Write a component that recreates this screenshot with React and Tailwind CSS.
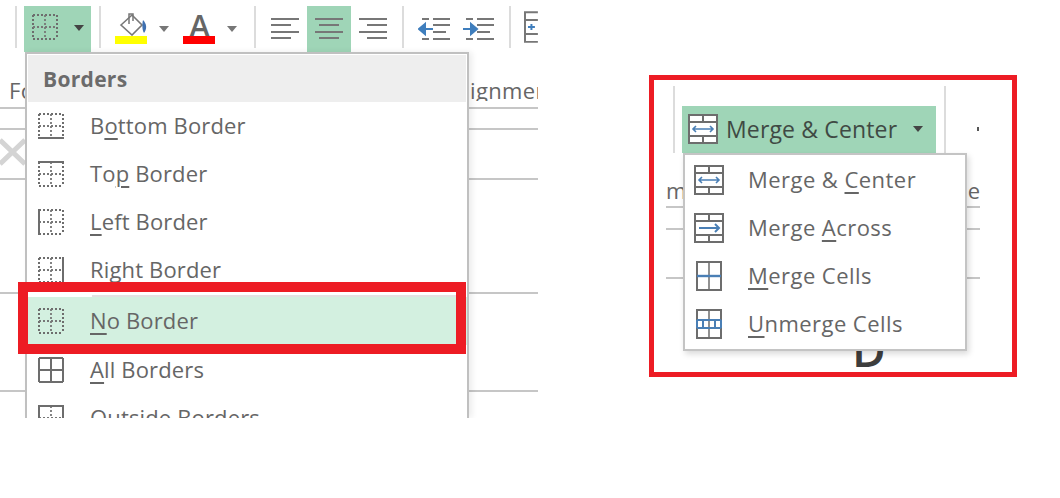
const font = { fontFamily: '"Open Sans", "Noto Sans", sans-serif' };

function BorderIcon({ side = "none", className = "" }) {
  const outer = "M1 1H25M1 25H25M1 1V25M25 1V25";
  const inner = "M1 13H25M13 1V25";
  return (
    <svg width="26" height="26" viewBox="0 0 26 26" className={className}>
      {side === "all" ? (
        <path d={`${outer}${inner}`} fill="none" stroke="#6d6d6d" strokeWidth="2" />
      ) : (
        <>
          <path d={outer} fill="none" stroke="#6d6d6d" strokeWidth="2" strokeDasharray="2 2" />
          <path d={inner} fill="none" stroke="#777" strokeWidth="1.8" strokeDasharray="2 2" />
        </>
      )}
      {side === "bottom" && <path d="M0 25H26" stroke="#6d6d6d" strokeWidth="2" />}
      {side === "top" && <path d="M0 1H26" stroke="#6d6d6d" strokeWidth="2" />}
      {side === "left" && <path d="M1 0V26" stroke="#6d6d6d" strokeWidth="2" />}
      {side === "right" && <path d="M25 0V26" stroke="#6d6d6d" strokeWidth="2" />}
      {side === "outside" && <rect x="1" y="1" width="24" height="24" fill="none" stroke="#6d6d6d" strokeWidth="2" />}
    </svg>
  );
}

function MergeIcon({ kind = "center" }) {
  const grey = "#6d6d6d";
  const blue = "#4a7fb5";
  if (kind === "cells" || kind === "unmerge") {
    return (
      <svg width="30" height="30" viewBox="0 0 30 30">
        <rect x="3" y="1" width="24" height="28" fill="none" stroke={grey} strokeWidth="2" />
        <path d="M15 1V29" stroke={grey} strokeWidth="1.5" />
        {kind === "cells" && <path d="M3 15H27" stroke={blue} strokeWidth="2.4" />}
        {kind === "unmerge" && (
          <>
            <path d="M3 11H27M3 19H27" stroke={blue} strokeWidth="2" />
            <path d="M3 11V19M9 11V19M21 11V19M27 11V19" stroke={blue} strokeWidth="2" />
          </>
        )}
      </svg>
    );
  }
  return (
    <svg width="30" height="30" viewBox="0 0 30 30">
      <rect x="1" y="1" width="28" height="28" fill="#fff" stroke={grey} strokeWidth="2" />
      <path d="M1 8H29M1 22H29M15 1V8M15 22V29" stroke={grey} strokeWidth="2" fill="none" />
      {kind === "center" ? (
        <path d="M5 15H25M8 12L5 15L8 18M22 12L25 15L22 18" stroke={blue} strokeWidth="1.6" fill="none" />
      ) : (
        <path d="M5 15H25M21 11L25 15L21 19" stroke={blue} strokeWidth="2" fill="none" />
      )}
    </svg>
  );
}

function Caret({ dark }) {
  return (
    <svg width="10" height="6" viewBox="0 0 10 6">
      <path d="M0 0H10L5 6Z" fill={dark ? "#444" : "#777"} />
    </svg>
  );
}

function Lines({ align }) {
  const rows = [0, 1, 0, 1];
  return (
    <div className="flex h-[21px] w-7 flex-col justify-between">
      {rows.map((short, i) => (
        <div
          key={i}
          className={`h-[2px] bg-[#777] ${short ? (align === "left" ? "w-5" : align === "right" ? "ml-2 w-5" : "mx-1 w-5") : "w-7"}`}
        />
      ))}
    </div>
  );
}

function Indent({ dir }) {
  return (
    <svg width="32" height="22" viewBox="0 0 32 22">
      <path d="M4 1H11M15 1H32M4 21H11M15 21H32M15 7H32M15 14H28" stroke="#777" strokeWidth="2" />
      {dir === "left" ? (
        <path d="M15 11H6M7 6L1 11L7 16Z" stroke="#3f7ebd" strokeWidth="2" fill="#3f7ebd" />
      ) : (
        <path d="M1 11H10M9 6L15 11L9 16Z" stroke="#3f7ebd" strokeWidth="2" fill="#3f7ebd" />
      )}
    </svg>
  );
}

function Sep() {
  return <div className="h-[42px] w-[2px] shrink-0 bg-[#dcdcdc]" />;
}

function Rule() {
  return <div className="h-[2px] bg-[#c6c6c6]" />;
}

function Label({ before, mark, after, className = "tracking-[0.15px]" }) {
  return (
    <span className={`pb-[2px] text-[22px] leading-none text-[#666] ${className}`}>
      {before}
      <span className="underline decoration-[2px] underline-offset-[4px]">{mark}</span>
      {after}
    </span>
  );
}

function BorderItem({ side, before, mark, after, className = "" }) {
  return (
    <div className={`flex h-12 shrink-0 items-center gap-[26px] pl-[10px] ${className}`}>
      <BorderIcon side={side} />
      <Label before={before} mark={mark} after={after} />
    </div>
  );
}

function MergeItem({ kind, before, mark, after }) {
  return (
    <div className="flex h-12 items-center gap-6 pl-[9px]">
      <MergeIcon kind={kind} />
      <Label before={before} mark={mark} after={after} className="tracking-[0.45px]" />
    </div>
  );
}

function BordersPanel() {
  return (
    <div className="relative h-[418px] w-[538px] shrink-0 overflow-hidden">
      {/* ribbon */}
      <div className="flex h-[52px] items-start pl-[15px] pt-[6px]">
        <Sep />
        <div className="ml-[7px] flex h-[46px] w-[68px] items-center bg-[#9fd5b7] pb-1 pl-2">
          <BorderIcon />
          <div className="ml-[16px] pt-[2px]">
            <Caret dark />
          </div>
        </div>
        <div className="ml-[8px]">
          <Sep />
        </div>
        <div className="ml-[14px] flex w-[32px] flex-col items-center pt-[6px]">
          <svg width="28" height="24" viewBox="0 0 28 24" className="ml-1">
            <path d="M2 13L13 3L23 13L13 23Z" fill="#fff" stroke="#777" strokeWidth="1.6" />
            <path d="M10 12V2H14V9" fill="none" stroke="#777" strokeWidth="1.5" />
            <path d="M24 8C28 12 28 17 25 21C23 18 23 12 24 8Z" fill="#3f70b0" />
          </svg>
          <div className="h-2 w-8 bg-[#ffff00]" />
        </div>
        <div className="ml-[12px] pt-[20px]">
          <Caret />
        </div>
        <div className="ml-[14px] flex w-[32px] flex-col items-center pt-[5px]">
          <span className="h-[25px] text-[32px] leading-[30px] font-semibold text-[#666]">A</span>
          <div className="h-2 w-8 bg-[#ff0000]" />
        </div>
        <div className="ml-[12px] pt-[20px]">
          <Caret />
        </div>
        <div className="ml-[17px]">
          <Sep />
        </div>
        <div className="ml-[15px] pt-[12px]">
          <Lines align="left" />
        </div>
        <div className="ml-[8px] flex h-[46px] w-[44px] justify-center bg-[#9fd5b7] pt-3">
          <Lines align="center" />
        </div>
        <div className="ml-[8px] pt-[12px]">
          <Lines align="right" />
        </div>
        <div className="ml-[15px]">
          <Sep />
        </div>
        <div className="ml-[14px] pt-[12px]">
          <Indent dir="left" />
        </div>
        <div className="ml-[12px] pt-[12px]">
          <Indent dir="right" />
        </div>
        <div className="ml-[15px]">
          <Sep />
        </div>
        <svg width="14" height="32" viewBox="0 0 14 32" className="ml-[13px] mt-[5px]">
          <path d="M14 1H1V31H14M1 9H14M1 23H14" fill="none" stroke="#777" strokeWidth="2" />
          <path d="M4 16H11M7.5 13V19" stroke="#3f7ebd" strokeWidth="2" />
        </svg>
      </div>

      {/* sheet behind the menu */}
      <div className="flex h-[55px] items-center justify-between pl-[9px] pt-[20px] text-[22px] leading-none tracking-[0.35px] text-[#666]">
        <span>Fo</span>
        <span className="w-[68px] overflow-hidden whitespace-nowrap">ignment</span>
      </div>
      <Rule />
      <div className="h-[19px]" />
      <Rule />
      <div className="h-[48px]" />
      <Rule />
      <div className="h-[112px]" />
      <Rule />
      <div className="h-[96px]" />
      <Rule />

      <svg width="25" height="30" viewBox="0 0 25 30" className="absolute left-0 top-[138px]">
        <path d="M0 2L25 26M25 2L0 26" stroke="#d4d4d4" strokeWidth="5" />
      </svg>

      {/* borders menu */}
      <div className="absolute left-[25px] top-[52px] flex h-[366px] w-[444px] flex-col overflow-hidden border-2 border-b-0 border-[#c0c0c0] bg-white pl-px pt-px shadow-[3px_0_6px_rgba(0,0,0,0.08)]">
        <div className="flex h-[47px] w-[438px] shrink-0 items-center bg-[#eeeeee] pl-[15px] pt-[1px] text-[21px] font-bold leading-none tracking-[0.3px] text-[#6b6b6b]">
          Borders
        </div>
        <BorderItem side="bottom" before="B" mark="o" after="ttom Border" />
        <BorderItem side="top" before="To" mark="p" after=" Border" />
        <BorderItem side="left" before="" mark="L" after="eft Border" />
        <BorderItem side="right" before="" mark="R" after="ight Border" />
        <div className="ml-[64px] mr-[2px] mt-px h-[2px] shrink-0 bg-[#e2e2e2]" />
        <BorderItem side="none" before="" mark="N" after="o Border" className="bg-[#d3f0e0]" />
        <div className="h-px shrink-0" />
        <BorderItem side="all" before="" mark="A" after="ll Borders" />
        <BorderItem side="outside" before="" mark="O" after="utside Borders" />
      </div>

      {/* callout */}
      <div className="absolute left-[18px] top-[282px] h-[72px] w-[448px] border-[10px] border-[#ed1c24]" />
    </div>
  );
}

function MergePanel() {
  return (
    <div className="relative ml-[111px] mt-[75px] h-[302px] w-[368px] shrink-0 overflow-hidden border-[5px] border-[#ed1c24] bg-white">
      {/* ribbon */}
      <div className="flex h-[73px] items-start pl-[19px] pt-[6px]">
        <div className="h-[67px] w-[2px] bg-[#dcdcdc]" />
        <div className="ml-[7px] mt-5 flex h-[47px] w-[254px] items-center bg-[#9fd5b7] pl-[6px] pb-px">
          <MergeIcon kind="center" />
          <span className="ml-[8px] text-[23px] leading-none tracking-[0.15px] text-[#3f4a44]">Merge &amp; Center</span>
          <div className="ml-4">
            <Caret dark />
          </div>
        </div>
        <div className="ml-2 h-[67px] w-[2px] bg-[#dcdcdc]" />
        <div className="ml-[31px] mt-[41px] h-1 w-[2px] bg-[#555]" />
      </div>

      {/* sheet behind the menu */}
      <div className="mx-3 flex h-[53px] w-[314px] items-end justify-between pb-[5px] text-[22px] leading-none text-[#666]">
        <span>m</span>
        <span>e</span>
      </div>
      <div className="mx-3 w-[314px]">
        <Rule />
        <div className="h-5" />
        <Rule />
        <div className="h-[47px]" />
        <Rule />
      </div>

      <span className="absolute left-[198px] top-[246px] text-[46px] font-semibold leading-none text-[#3d3d3d]">D</span>

      {/* merge menu */}
      <div className="absolute left-[29px] top-[73px] h-[198px] w-[284px] border-2 border-[#c4c4c4] bg-white pt-px shadow-[2px_3px_6px_rgba(0,0,0,0.15)]">
        <MergeItem kind="center" before="Merge & " mark="C" after="enter" />
        <MergeItem kind="across" before="Merge " mark="A" after="cross" />
        <MergeItem kind="cells" before="" mark="M" after="erge Cells" />
        <MergeItem kind="unmerge" before="" mark="U" after="nmerge Cells" />
      </div>
    </div>
  );
}

export default function App() {
  return (
    <div className="flex h-[498px] w-[1060px] items-start overflow-hidden bg-white" style={font}>
      <BordersPanel />
      <MergePanel />
    </div>
  );
}
